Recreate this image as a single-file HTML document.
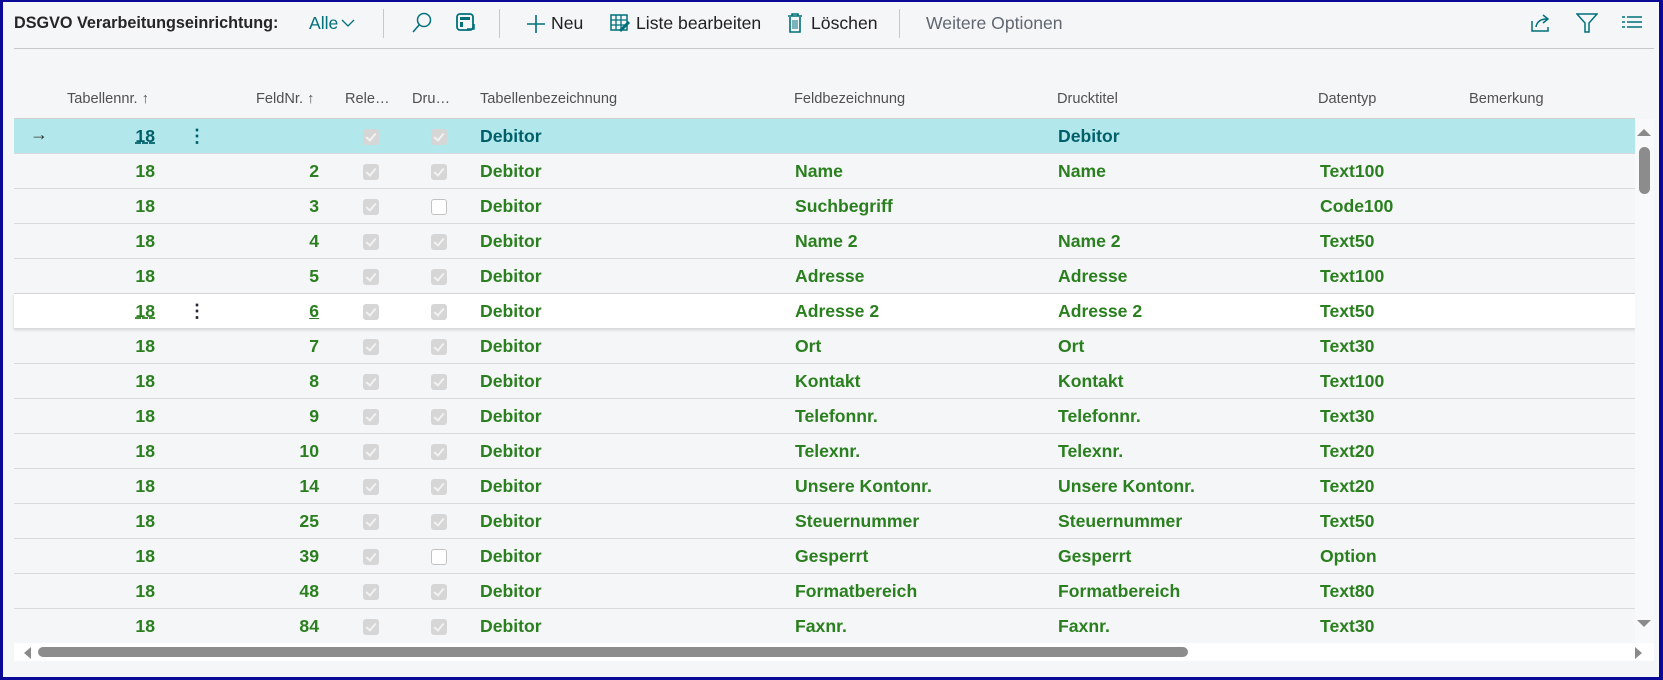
<!DOCTYPE html>
<html><head><meta charset="utf-8"><style>
*{margin:0;padding:0;box-sizing:border-box}
body{width:1663px;height:680px;overflow:hidden;background:#f5f6f8;font-family:"Liberation Sans",sans-serif;position:relative}
.frame{position:absolute;left:0;top:0;width:1663px;height:680px;border:3px solid #0a0a96;border-top-width:2px;border-right-width:4px}
.a{position:absolute;white-space:nowrap}
.tb{top:12px;font-size:17.6px;color:#212121;line-height:22px}
.sep{position:absolute;top:9px;width:1px;height:29px;background:#c8c8c8}
.hd{top:89px;font-size:14.6px;color:#505050;line-height:20px}
.row{position:absolute;left:14px;width:1621px;height:35px;border-bottom:1px solid #d9dadd;font-weight:bold;font-size:17.6px;color:#2a7f1e}
.row .a{top:7px;line-height:20px}
.r{text-align:right}
.cb{position:absolute;top:10px;width:16px;height:16px;border-radius:3px;background:#d6d6d6}
.cb::after{content:"";position:absolute;left:5px;top:2px;width:4px;height:8px;border:solid #f2f2f2;border-width:0 2px 2px 0;transform:rotate(40deg)}
.cb.e{background:#fff;border:1px solid #c2c2c2}
.cb.e::after{display:none}
.u{text-decoration:underline}
</style></head><body>
<div class="frame"></div>
<div class="a tb" style="left:14px;font-weight:bold;font-size:16.2px;color:#262626">DSGVO Verarbeitungseinrichtung:</div>
<div class="a tb" style="left:309px;color:#00707a">Alle</div>
<svg class="a" style="left:341px;top:18px" width="14" height="10"><path d="M1 2l6 6 6-6" fill="none" stroke="#00707a" stroke-width="1.3"/></svg>
<div class="sep" style="left:383px"></div>
<svg class="a" style="left:411px;top:11px" width="22" height="24"><circle cx="13" cy="9" r="6.5" fill="none" stroke="#00707a" stroke-width="1.5"/><path d="M8.5 13.5L2 21" stroke="#00707a" stroke-width="1.5"/></svg>
<svg class="a" style="left:455px;top:12px" width="22" height="22"><rect x="2" y="2" width="16" height="16" rx="3" fill="none" stroke="#00707a" stroke-width="1.8"/><rect x="5" y="5" width="10" height="3" fill="#00707a"/><rect x="5" y="10" width="3" height="5" fill="#00707a"/><path d="M12 17h7v-5" fill="none" stroke="#00707a" stroke-width="1.5"/></svg>
<div class="sep" style="left:499px"></div>
<svg class="a" style="left:526px;top:14px" width="20" height="20"><path d="M10 1v18M1 10h18" stroke="#00707a" stroke-width="1.6"/></svg>
<div class="a tb" style="left:551px">Neu</div>
<svg class="a" style="left:610px;top:13px" width="22" height="20"><rect x="1" y="2" width="16" height="15" fill="none" stroke="#00707a" stroke-width="1.5"/><path d="M1 7h16M1 12h16M6 2v15M11 2v15" stroke="#00707a" stroke-width="1.3"/><path d="M10 18l9-9" stroke="#00707a" stroke-width="3"/></svg>
<div class="a tb" style="left:636px">Liste bearbeiten</div>
<svg class="a" style="left:786px;top:12px" width="18" height="22"><path d="M2 4h14M6 4V2h6v2M4 5v15h10V5" fill="none" stroke="#00707a" stroke-width="1.6"/><path d="M7 8v9M9 8v9M11 8v9" stroke="#00707a" stroke-width="1"/></svg>
<div class="a tb" style="left:811px">Löschen</div>
<div class="sep" style="left:899px"></div>
<div class="a tb" style="left:926px;color:#606770">Weitere Optionen</div>
<svg class="a" style="left:1530px;top:13px" width="22" height="20"><path d="M2 8v10h16v-4" fill="none" stroke="#00707a" stroke-width="1.5"/><path d="M6 14c1-6 5-8 11-8M13 2l5 4-5 4" fill="none" stroke="#00707a" stroke-width="1.5"/></svg>
<svg class="a" style="left:1576px;top:13px" width="22" height="20"><path d="M1 1h20l-8 9v9h-4v-9z" fill="none" stroke="#00707a" stroke-width="1.5"/></svg>
<svg class="a" style="left:1622px;top:15px" width="20" height="16"><path d="M0 2h3M5 2h15M0 7h3M5 7h15M0 12h3M5 12h15" stroke="#00707a" stroke-width="1.5"/></svg>
<div class="a" style="left:14px;top:48px;width:1640px;height:1px;background:#c8c8c8"></div>
<div class="a hd" style="left:67px">Tabellennr. ↑</div>
<div class="a hd" style="left:256px">FeldNr. ↑</div>
<div class="a hd" style="left:345px">Rele…</div>
<div class="a hd" style="left:412px">Dru…</div>
<div class="a hd" style="left:480px">Tabellenbezeichnung</div>
<div class="a hd" style="left:794px">Feldbezeichnung</div>
<div class="a hd" style="left:1057px">Drucktitel</div>
<div class="a hd" style="left:1318px">Datentyp</div>
<div class="a hd" style="left:1469px">Bemerkung</div>
<div class="a" style="left:14px;top:118px;width:1621px;height:1px;background:#d0d0d0"></div>

<div class="row" style="top:119px;background:#b2e8ec;color:#00606a"><div class="a" style="left:16px;font-weight:normal;font-size:18px;top:5px;color:#333">→</div><div class="a r u" style="left:80px;width:61px;text-decoration-style:dashed">18</div><div class="a" style="left:174px;font-size:18px">⋮</div><div class="cb" style="left:349px"></div><div class="cb" style="left:417px"></div><div class="a" style="left:466px">Debitor</div><div class="a" style="left:1044px">Debitor</div></div>

<div class="row" style="top:154px"><div class="a r" style="left:80px;width:61px">18</div><div class="a r" style="left:250px;width:55px">2</div><div class="cb" style="left:349px"></div><div class="cb" style="left:417px"></div><div class="a" style="left:466px">Debitor</div><div class="a" style="left:781px">Name</div><div class="a" style="left:1044px">Name</div><div class="a" style="left:1306px">Text100</div></div>
<div class="row" style="top:189px"><div class="a r" style="left:80px;width:61px">18</div><div class="a r" style="left:250px;width:55px">3</div><div class="cb" style="left:349px"></div><div class="cb e" style="left:417px"></div><div class="a" style="left:466px">Debitor</div><div class="a" style="left:781px">Suchbegriff</div><div class="a" style="left:1306px">Code100</div></div>
<div class="row" style="top:224px"><div class="a r" style="left:80px;width:61px">18</div><div class="a r" style="left:250px;width:55px">4</div><div class="cb" style="left:349px"></div><div class="cb" style="left:417px"></div><div class="a" style="left:466px">Debitor</div><div class="a" style="left:781px">Name 2</div><div class="a" style="left:1044px">Name 2</div><div class="a" style="left:1306px">Text50</div></div>
<div class="row" style="top:259px"><div class="a r" style="left:80px;width:61px">18</div><div class="a r" style="left:250px;width:55px">5</div><div class="cb" style="left:349px"></div><div class="cb" style="left:417px"></div><div class="a" style="left:466px">Debitor</div><div class="a" style="left:781px">Adresse</div><div class="a" style="left:1044px">Adresse</div><div class="a" style="left:1306px">Text100</div></div>
<div class="row" style="top:294px;background:#fff;box-shadow:0 1px 3px rgba(0,0,0,.15)"><div class="a r u" style="left:80px;width:61px;text-decoration-style:dashed">18</div><div class="a" style="left:174px;font-size:18px;color:#223">⋮</div><div class="a r u" style="left:250px;width:55px">6</div><div class="cb" style="left:349px"></div><div class="cb" style="left:417px"></div><div class="a" style="left:466px">Debitor</div><div class="a" style="left:781px">Adresse 2</div><div class="a" style="left:1044px">Adresse 2</div><div class="a" style="left:1306px">Text50</div></div>
<div class="row" style="top:329px"><div class="a r" style="left:80px;width:61px">18</div><div class="a r" style="left:250px;width:55px">7</div><div class="cb" style="left:349px"></div><div class="cb" style="left:417px"></div><div class="a" style="left:466px">Debitor</div><div class="a" style="left:781px">Ort</div><div class="a" style="left:1044px">Ort</div><div class="a" style="left:1306px">Text30</div></div>
<div class="row" style="top:364px"><div class="a r" style="left:80px;width:61px">18</div><div class="a r" style="left:250px;width:55px">8</div><div class="cb" style="left:349px"></div><div class="cb" style="left:417px"></div><div class="a" style="left:466px">Debitor</div><div class="a" style="left:781px">Kontakt</div><div class="a" style="left:1044px">Kontakt</div><div class="a" style="left:1306px">Text100</div></div>
<div class="row" style="top:399px"><div class="a r" style="left:80px;width:61px">18</div><div class="a r" style="left:250px;width:55px">9</div><div class="cb" style="left:349px"></div><div class="cb" style="left:417px"></div><div class="a" style="left:466px">Debitor</div><div class="a" style="left:781px">Telefonnr.</div><div class="a" style="left:1044px">Telefonnr.</div><div class="a" style="left:1306px">Text30</div></div>
<div class="row" style="top:434px"><div class="a r" style="left:80px;width:61px">18</div><div class="a r" style="left:250px;width:55px">10</div><div class="cb" style="left:349px"></div><div class="cb" style="left:417px"></div><div class="a" style="left:466px">Debitor</div><div class="a" style="left:781px">Telexnr.</div><div class="a" style="left:1044px">Telexnr.</div><div class="a" style="left:1306px">Text20</div></div>
<div class="row" style="top:469px"><div class="a r" style="left:80px;width:61px">18</div><div class="a r" style="left:250px;width:55px">14</div><div class="cb" style="left:349px"></div><div class="cb" style="left:417px"></div><div class="a" style="left:466px">Debitor</div><div class="a" style="left:781px">Unsere Kontonr.</div><div class="a" style="left:1044px">Unsere Kontonr.</div><div class="a" style="left:1306px">Text20</div></div>
<div class="row" style="top:504px"><div class="a r" style="left:80px;width:61px">18</div><div class="a r" style="left:250px;width:55px">25</div><div class="cb" style="left:349px"></div><div class="cb" style="left:417px"></div><div class="a" style="left:466px">Debitor</div><div class="a" style="left:781px">Steuernummer</div><div class="a" style="left:1044px">Steuernummer</div><div class="a" style="left:1306px">Text50</div></div>
<div class="row" style="top:539px"><div class="a r" style="left:80px;width:61px">18</div><div class="a r" style="left:250px;width:55px">39</div><div class="cb" style="left:349px"></div><div class="cb e" style="left:417px"></div><div class="a" style="left:466px">Debitor</div><div class="a" style="left:781px">Gesperrt</div><div class="a" style="left:1044px">Gesperrt</div><div class="a" style="left:1306px">Option</div></div>
<div class="row" style="top:574px"><div class="a r" style="left:80px;width:61px">18</div><div class="a r" style="left:250px;width:55px">48</div><div class="cb" style="left:349px"></div><div class="cb" style="left:417px"></div><div class="a" style="left:466px">Debitor</div><div class="a" style="left:781px">Formatbereich</div><div class="a" style="left:1044px">Formatbereich</div><div class="a" style="left:1306px">Text80</div></div>
<div class="row" style="top:609px;border-bottom:none"><div class="a r" style="left:80px;width:61px">18</div><div class="a r" style="left:250px;width:55px">84</div><div class="cb" style="left:349px"></div><div class="cb" style="left:417px"></div><div class="a" style="left:466px">Debitor</div><div class="a" style="left:781px">Faxnr.</div><div class="a" style="left:1044px">Faxnr.</div><div class="a" style="left:1306px">Text30</div></div>

<div class="a" style="left:1635px;top:119px;width:19px;height:524px;background:#f8f9fb"></div>
<svg class="a" style="left:1637px;top:128px" width="14" height="8"><path d="M0 8L7 1l7 7z" fill="#8a8a8a"/></svg>
<div class="a" style="left:1639px;top:147px;width:11px;height:47px;border-radius:6px;background:#8c8c8c"></div>
<svg class="a" style="left:1637px;top:620px" width="14" height="8"><path d="M0 0l7 7 7-7z" fill="#8a8a8a"/></svg>
<div class="a" style="left:14px;top:643px;width:1640px;height:18px;background:#fff"></div>
<svg class="a" style="left:23px;top:647px" width="8" height="12"><path d="M8 0L1 6l7 6z" fill="#8a8a8a"/></svg>
<div class="a" style="left:38px;top:647px;width:1150px;height:10px;border-radius:5px;background:#8c8c8c"></div>
<svg class="a" style="left:1635px;top:647px" width="8" height="12"><path d="M0 0l7 6-7 6z" fill="#8a8a8a"/></svg>
</body></html>
